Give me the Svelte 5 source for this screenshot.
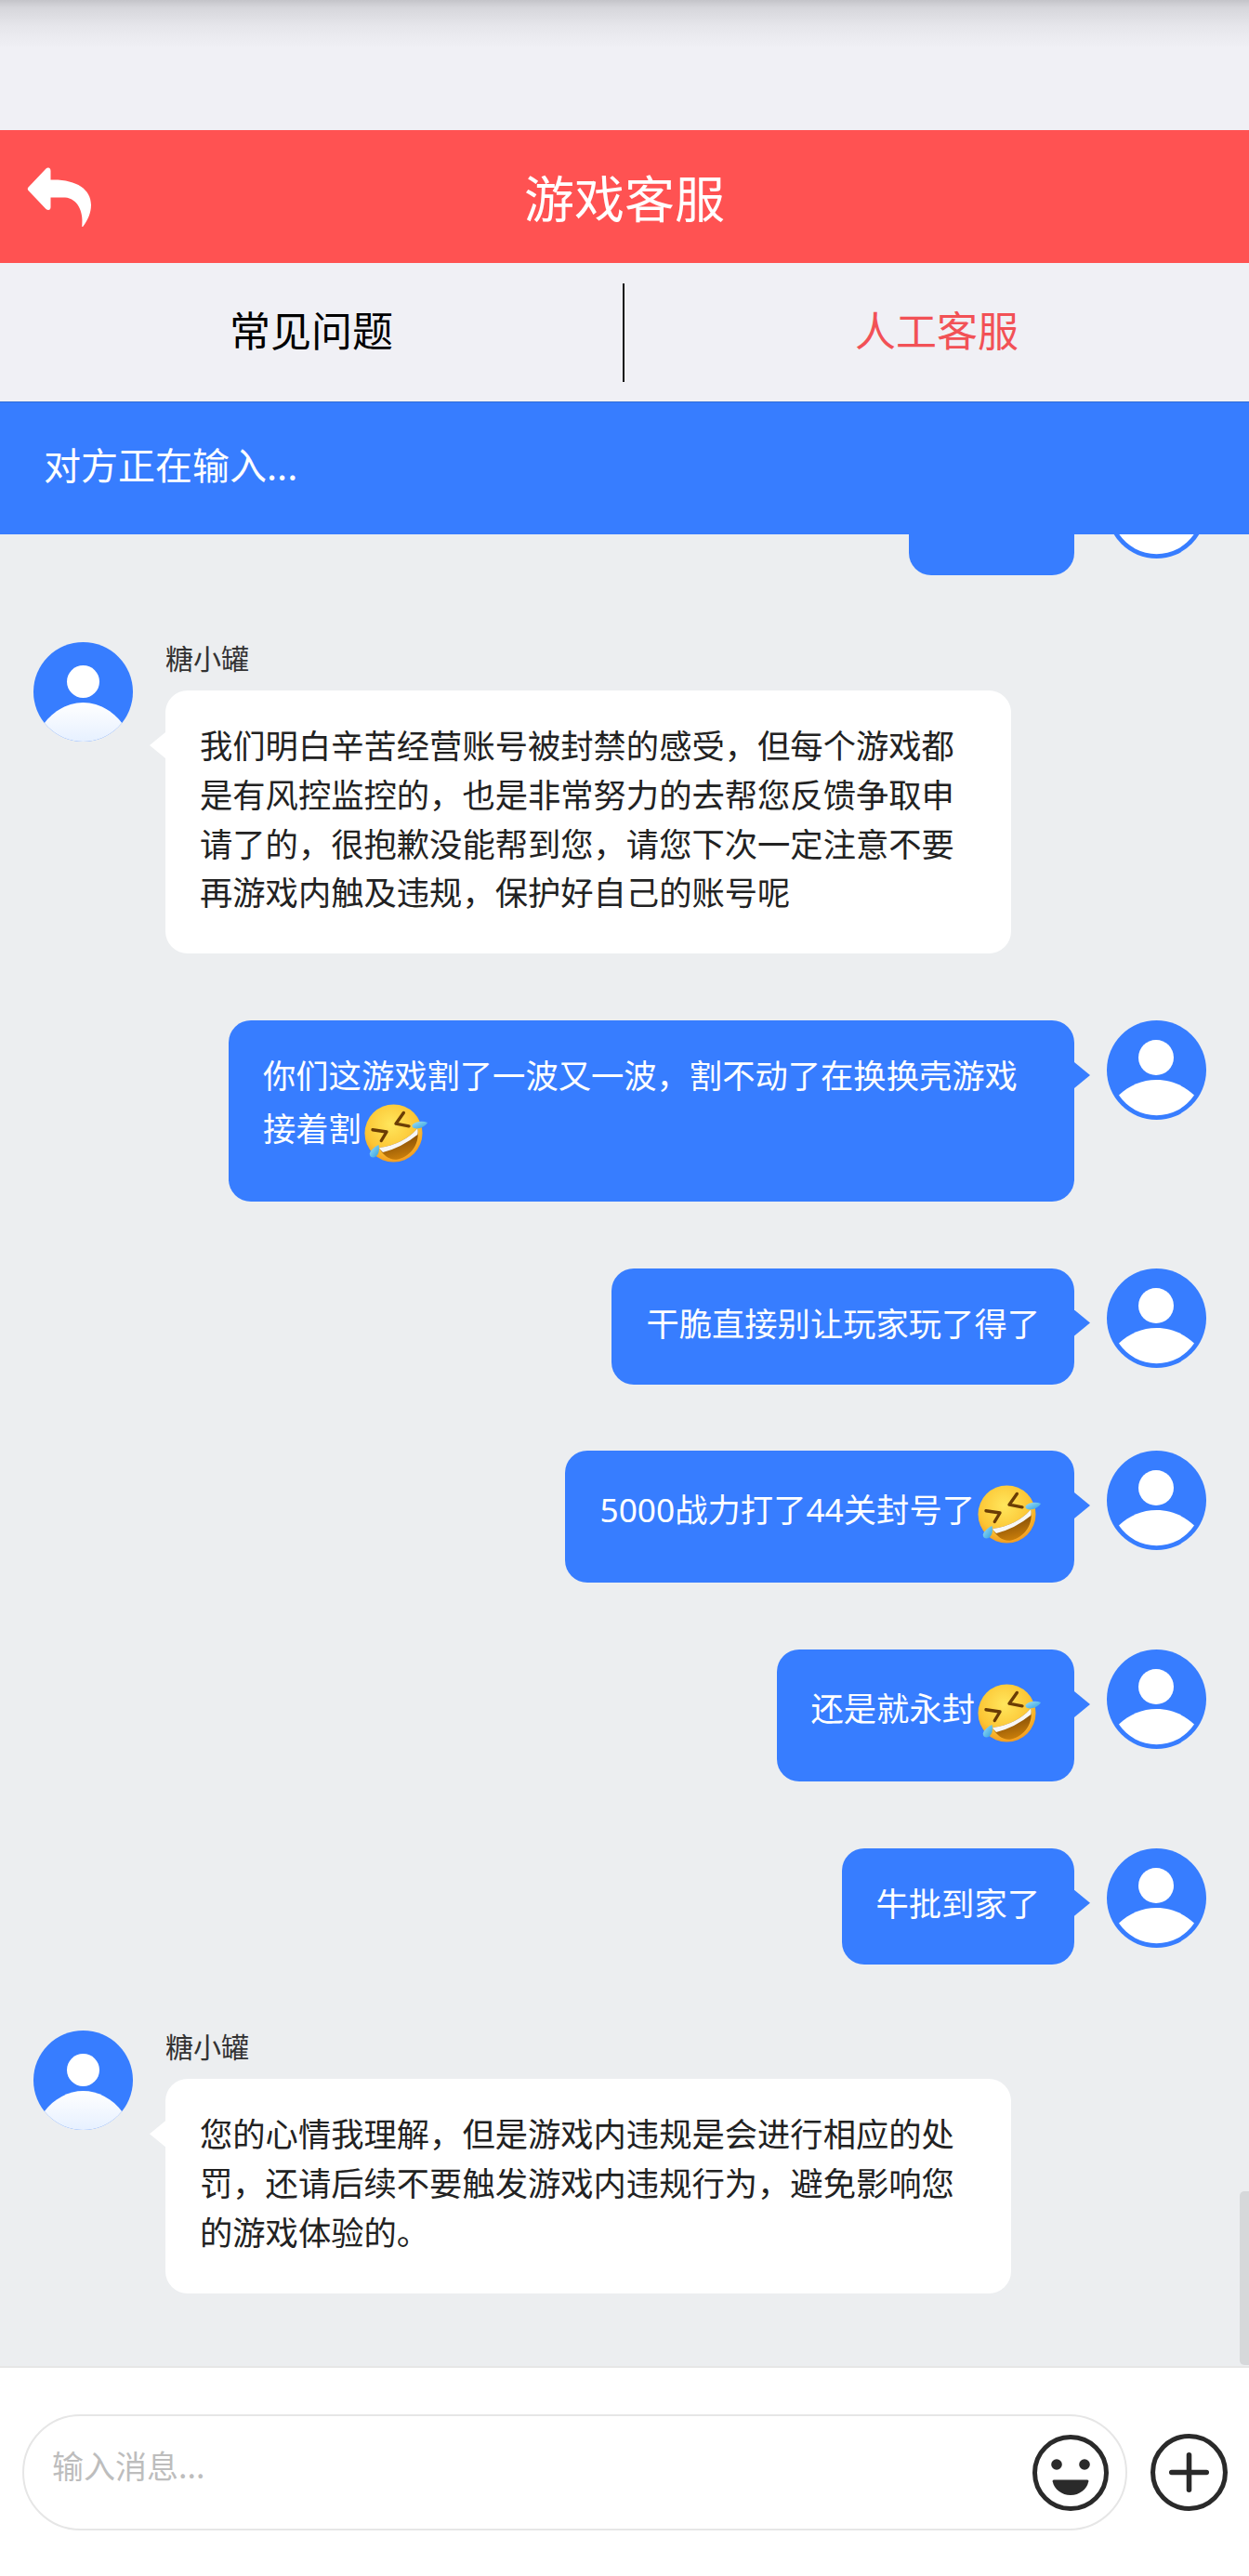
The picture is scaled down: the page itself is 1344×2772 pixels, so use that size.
<script>
  const longA = '我们明白辛苦经营账号被封禁的感受，但每个游戏都是有风控监控的，也是非常努力的去帮您反馈争取申请了的，很抱歉没能帮到您，请您下次一定注意不要再游戏内触及违规，保护好自己的账号呢';
  const longB = '您的心情我理解，但是游戏内违规是会进行相应的处罚，还请后续不要触发游戏内违规行为，避免影响您的游戏体验的。';
  const messages = [
    { from: 'them', text: longA },
    { from: 'me', text: '你们这游戏割了一波又一波，割不动了在换换壳游戏接着割', laugh: true },
    { from: 'me', text: '干脆直接别让玩家玩了得了' },
    { from: 'me', text: '5000战力打了44关封号了', laugh: true },
    { from: 'me', text: '还是就永封', laugh: true },
    { from: 'me', text: '牛批到家了' },
    { from: 'them', text: longB }
  ];
</script>

{#snippet laugh()}
  <svg class="laugh" viewBox="-3 -3.5 70 70" aria-hidden="true">
    <defs>
      <radialGradient id="face" cx="45%" cy="35%" r="70%">
        <stop offset="0" stop-color="#ffe65c" />
        <stop offset="0.65" stop-color="#fcc534" />
        <stop offset="1" stop-color="#f0921c" />
      </radialGradient>
      <linearGradient id="mouth" x1="0" y1="0" x2="0.3" y2="1">
        <stop offset="0" stop-color="#5c3205" />
        <stop offset="1" stop-color="#c47a0a" />
      </linearGradient>
      <linearGradient id="tear" x1="0" y1="0" x2="1" y2="1">
        <stop offset="0" stop-color="#9fe0f5" />
        <stop offset="1" stop-color="#2f9fe0" />
      </linearGradient>
    </defs>
    <circle cx="31.5" cy="32" r="31" fill="url(#face)" />
    <path d="M16 47.5Q42 44 57 27C60.5 42 51 56.5 36 60C28 61.5 20 56 16 47.5Z" fill="url(#mouth)" />
    <path d="M16 47.5Q42 44 57 27C57.8 29 57.8 31 57.3 33.5Q40 47.5 20 52.5C18.5 51 17 49.5 16 47.5Z" fill="#f7f7f7" />
    <path d="M9 28.3L24 30.5L18.3 40" fill="none" stroke="#6b3d05" stroke-width="3.4" stroke-linecap="round" stroke-linejoin="round" />
    <path d="M42.3 10L34 21.7L48 24.3" fill="none" stroke="#6b3d05" stroke-width="3.4" stroke-linecap="round" stroke-linejoin="round" />
    <path d="M52 22.5C56 19 63 18.5 68 20.5C65 25.5 58 28 53.5 26.5C51.5 25.8 50.8 23.8 52 22.5Z" fill="url(#tear)" />
    <path d="M15.5 44.5C16.5 49 16 54 12.5 57C9.5 59.5 5.5 57.5 5.8 54C6.2 50.5 11 46.5 15.5 44.5Z" fill="url(#tear)" />
  </svg>
{/snippet}

{#snippet avatarThem()}
  <svg class="avatar" viewBox="0 0 107 107" aria-hidden="true">
    <defs>
      <linearGradient id="bodyFade" x1="0" y1="0" x2="0" y2="1">
        <stop offset="0" stop-color="#ffffff" />
        <stop offset="1" stop-color="#e6f0ff" />
      </linearGradient>
      <clipPath id="disc">
        <circle cx="53.5" cy="53.5" r="53.5" />
      </clipPath>
    </defs>
    <g clip-path="url(#disc)">
      <rect width="107" height="107" fill="#377dff" />
      <circle cx="53.5" cy="42.5" r="17.5" fill="#fff" />
      <path d="M11 88C22 73 38 65 53.5 65C69 65 85 73 96 88V108H11Z" fill="url(#bodyFade)" />
    </g>
  </svg>
{/snippet}

{#snippet avatarMe()}
  <svg class="avatar" viewBox="0 0 107 107" aria-hidden="true">
    <circle cx="53.5" cy="53.5" r="53.5" fill="#377dff" />
    <circle cx="53" cy="40" r="19" fill="#fff" />
    <path d="M13 80.5C24 70 38 64 53.5 64C69 64 83 70 94 80.5A48.7 48.7 0 0 1 13 80.5Z" fill="#fff" />
  </svg>
{/snippet}

<div class="page">
  <div class="status"></div>

  <header class="title-bar">
    <svg class="back" viewBox="0 0 80 72" aria-hidden="true">
      <path d="M1.5 22.5L20 3C23 .5 25.5 1.5 25.5 5V14.5C52 13.5 69 24 69 41.5C69 50 65.5 58 60.5 64.5C59.5 65.5 59 65 59.3 63.5C61 48 54 34.5 41 33.5H25.5V44C25.5 47 23 48 20.5 46L1.5 26C.5 25 .5 23.5 1.5 22.5Z" fill="#fff" />
    </svg>
    <h1>游戏客服</h1>
  </header>

  <nav class="tabs">
    <div class="tab first">常见问题</div>
    <div class="tab active">人工客服</div>
  </nav>

  <div class="typing">对方正在输入...</div>

  <main class="chat">
    <div class="row me cut">
      <div class="bubble stub"></div>
      {@render avatarMe()}
    </div>

    {#each messages as m}
      {#if m.from === 'them'}
        <div class="row them">
          {@render avatarThem()}
          <div class="col">
            <div class="name">糖小罐</div>
            <div class="bubble">{m.text}</div>
          </div>
        </div>
      {:else}
        <div class="row me">
          <div class="bubble">{m.text}{#if m.laugh}{@render laugh()}{/if}</div>
          {@render avatarMe()}
        </div>
      {/if}
    {/each}

    <div class="scrollbar"></div>
  </main>

  <footer class="composer">
    <div class="pill">
      <input type="text" placeholder="输入消息..." />
      <svg class="tool" viewBox="0 0 82 82" aria-hidden="true">
        <circle cx="41" cy="41" r="38.5" fill="none" stroke="#2a2a2a" stroke-width="5" />
        <circle cx="26" cy="32" r="5.8" fill="#2a2a2a" />
        <circle cx="56" cy="32" r="5.8" fill="#2a2a2a" />
        <path d="M23 48.5H59C60 48.5 60.5 49.3 60.3 50.3C58.5 59 50.5 65 41 65C31.5 65 23.5 59 21.7 50.3C21.5 49.3 22 48.5 23 48.5Z" fill="#2a2a2a" />
      </svg>
    </div>
    <svg class="tool plus" viewBox="0 0 82 82" aria-hidden="true">
      <circle cx="41" cy="41" r="38.5" fill="none" stroke="#2a2a2a" stroke-width="5" />
      <path d="M41 22.5V59.5M22.5 41H59.5" fill="none" stroke="#2a2a2a" stroke-width="5.5" stroke-linecap="round" />
    </svg>
  </footer>
</div>

<style>
  :global(body) {
    margin: 0;
    background: #f0f0f5;
  }

  .page {
    width: 1344px;
    height: 2772px;
    display: flex;
    flex-direction: column;
    overflow: hidden;
    font-family: "Noto Sans CJK SC", "Noto Sans", sans-serif;
    background: #f0f0f5;
  }

  .status {
    height: 140px;
    flex: none;
    background: linear-gradient(#c4c4c9 0, #d6d6db 8px, #e6e6eb 28px, #f0f0f5 52px);
  }

  .title-bar {
    height: 143px;
    flex: none;
    display: grid;
    grid-template-columns: 1fr auto 1fr;
    align-items: center;
    background: #ff5252;
  }

  .back {
    width: 80px;
    height: 72px;
    margin: 6px 0 0 29px;
    justify-self: start;
  }

  h1 {
    grid-column: 2;
    margin: 0;
    font-size: 54px;
    line-height: 1;
    font-weight: 400;
    color: #fff;
  }

  .tabs {
    height: 149px;
    flex: none;
    display: grid;
    grid-template-columns: 1fr 1fr;
    align-items: center;
    background: #f0f0f5;
  }

  .tab {
    box-sizing: border-box;
    height: 106px;
    padding-bottom: 7px;
    display: flex;
    align-items: center;
    justify-content: center;
    font-size: 44px;
    color: #000;
  }

  .tab.first {
    border-right: 2px solid #111;
  }

  .tab.active {
    color: #f25156;
  }

  .typing {
    box-sizing: border-box;
    height: 143px;
    flex: none;
    border-top: 1px solid #2f6cd6;
    display: flex;
    align-items: center;
    padding: 0 0 10px 47px;
    font-size: 40px;
    color: #fff;
    background: #377dff;
  }

  .chat {
    position: relative;
    flex: 1;
    min-height: 0;
    overflow: hidden;
    display: flex;
    flex-direction: column;
    gap: 71.6px;
    padding: 0 46px 0 36px;
    background: #eceef0;
  }

  .row {
    display: flex;
    align-items: flex-start;
    flex: none;
  }

  .row.me {
    justify-content: flex-end;
    gap: 35px;
  }

  .row.cut {
    margin-top: -81px;
    margin-bottom: 0.4px;
  }

  .row.them {
    gap: 35px;
  }

  .avatar {
    width: 107px;
    height: 107px;
    flex: none;
    display: block;
  }

  .col {
    display: flex;
    flex-direction: column;
  }

  .name {
    height: 52px;
    font-size: 30px;
    line-height: 34px;
    color: #333;
    margin-top: -1px;
    margin-bottom: 1px;
  }

  .bubble {
    position: relative;
    box-sizing: border-box;
    padding: 33.1px 37px 39.1px;
    border-radius: 24px;
    font-family: "Noto Sans", "Noto Sans CJK SC", sans-serif;
    font-size: 35.3px;
    line-height: 52.8px;
    word-break: break-all;
  }

  .bubble::after {
    content: "";
    position: absolute;
    top: 45px;
    width: 17px;
    height: 28px;
  }

  .them .bubble {
    width: 910px;
    color: #222;
    background: #fff;
  }

  .them .bubble::after {
    left: -17px;
    background: #fff;
    clip-path: polygon(100% 0, 0 50%, 100% 100%);
  }

  .me .bubble {
    max-width: 910px;
    color: #fff;
    background: #377dff;
  }

  .me .bubble::after {
    right: -17px;
    background: #377dff;
    clip-path: polygon(0 0, 100% 50%, 0 100%);
  }

  .bubble.stub {
    width: 178px;
    height: 125px;
  }

  .laugh {
    width: 70px;
    height: 70px;
    vertical-align: middle;
    overflow: visible;
  }

  .scrollbar {
    position: absolute;
    right: 0;
    bottom: 1px;
    width: 10px;
    height: 187px;
    border-radius: 5px 0 0 5px;
    background: #d6d8da;
  }

  .composer {
    height: 224px;
    flex: none;
    box-sizing: content-box;
    border-top: 2px solid #e6e6e6;
    display: flex;
    align-items: flex-start;
    gap: 25px;
    padding: 0 23px 0 24px;
    background: #fff;
  }

  .pill {
    box-sizing: border-box;
    width: 1189px;
    height: 125px;
    margin-top: 50px;
    display: flex;
    align-items: center;
    border: 2px solid #e6e6e6;
    border-radius: 62.5px;
    padding: 0 18px 0 30px;
    background: #fff;
  }

  input {
    flex: 1;
    min-width: 0;
    border: 0;
    outline: 0;
    padding: 0 0 17px;
    background: transparent;
    font-family: inherit;
    font-size: 34px;
    color: #333;
  }

  input::placeholder {
    color: #bdbdbd;
    opacity: 1;
  }

  .tool {
    width: 82px;
    height: 82px;
    flex: none;
    display: block;
  }

  .tool.plus {
    margin-top: 71px;
    width: 83px;
    height: 83px;
  }
</style>
